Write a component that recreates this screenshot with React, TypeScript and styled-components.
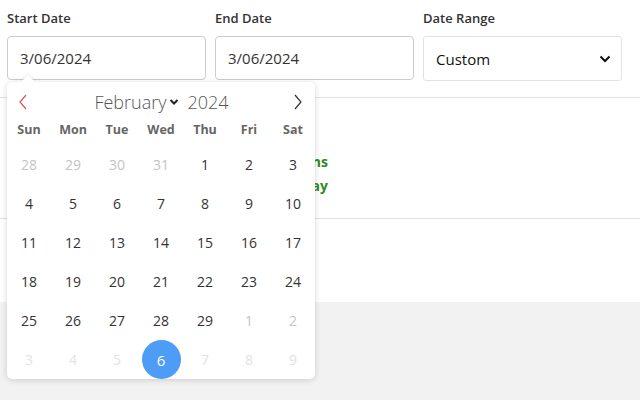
import React from "react";
import styled, { createGlobalStyle } from "styled-components";

const GlobalStyle = createGlobalStyle`
  html, body {
    margin: 0;
    padding: 0;
    background: #fff;
    font-family: "Open Sans", "Noto Sans", sans-serif;
    color: #333;
  }
  * { box-sizing: border-box; }
`;

type DayCell = { day: number; kind: "out" | "in" | "disabled" | "selected" };

const weekDays = ["Sun", "Mon", "Tue", "Wed", "Thu", "Fri", "Sat"];

function buildDays(): DayCell[] {
  const cells: DayCell[] = [];
  [28, 29, 30, 31].forEach((d) => cells.push({ day: d, kind: "out" }));
  for (let d = 1; d <= 29; d++) cells.push({ day: d, kind: "in" });
  cells.push({ day: 1, kind: "out" }, { day: 2, kind: "out" });
  [3, 4, 5].forEach((d) => cells.push({ day: d, kind: "disabled" }));
  cells.push({ day: 6, kind: "selected" });
  [7, 8, 9].forEach((d) => cells.push({ day: d, kind: "disabled" }));
  return cells;
}

export default function App() {
  const days = buildDays();
  return (
    <>
      <GlobalStyle />
      <Page>
        <Filters>
          <Field>
            <Label>Start Date</Label>
            <DateInput>3/06/2024</DateInput>
            <Popup>
              <Notch />
              <CalHeader>
                <NavButton $prev>
                  <svg width="10" height="16" viewBox="0 0 10 16">
                    <path d="M8 1 L2 8 L8 15" fill="none" stroke="currentColor" strokeWidth="1.2" />
                  </svg>
                </NavButton>
                <MonthYear>
                  <span>February</span>
                  <svg width="10" height="8" viewBox="0 0 10 8">
                    <path d="M1.5 2 L5 5.5 L8.5 2" fill="none" stroke="#222" strokeWidth="2" />
                  </svg>
                  <Year>2024</Year>
                </MonthYear>
                <NavButton>
                  <svg width="10" height="16" viewBox="0 0 10 16">
                    <path d="M2 1 L8 8 L2 15" fill="none" stroke="currentColor" strokeWidth="1.2" />
                  </svg>
                </NavButton>
              </CalHeader>
              <Grid>
                {weekDays.map((w) => (
                  <WeekDay key={w}>{w}</WeekDay>
                ))}
                {days.map((c, i) => (
                  <Day key={i} $kind={c.kind}>
                    {c.kind === "selected" ? <Selected>{c.day}</Selected> : c.day}
                  </Day>
                ))}
              </Grid>
            </Popup>
          </Field>
          <Field>
            <Label>End Date</Label>
            <DateInput>3/06/2024</DateInput>
          </Field>
          <Field>
            <Label>Date Range</Label>
            <Select>
              <span>Custom</span>
              <svg width="12" height="8" viewBox="0 0 12 8">
                <path d="M1.5 1.5 L6 6 L10.5 1.5" fill="none" stroke="#111" strokeWidth="2" />
              </svg>
            </Select>
          </Field>
        </Filters>
        <Summary>
          <SummaryLine>Total 0 sessions</SummaryLine>
          <SummaryLine>Average 0 per day</SummaryLine>
        </Summary>
        <Spacer />
        <Footer />
      </Page>
    </>
  );
}

const Page = styled.div`
  min-height: 400px;
  display: flex;
  flex-direction: column;
  background: #fff;
`;

const Filters = styled.div`
  position: relative;
  z-index: 2;
  display: flex;
  gap: 9px;
  padding: 8px 7px 16px;
  border-bottom: 1px solid #e3e3e3;
`;

const Field = styled.div`
  position: relative;
  width: 199px;
  display: flex;
  flex-direction: column;
`;

const Label = styled.div`
  font-size: 13px;
  font-weight: 600;
  color: #333;
  height: 28px;
  line-height: 20px;
`;

const DateInput = styled.div`
  height: 44px;
  border: 1px solid #cccccc;
  border-radius: 4px;
  padding: 0 12px;
  display: flex;
  align-items: center;
  font-size: 15px;
  color: #333;
`;

const Select = styled.div`
  height: 45px;
  border: 1px solid #e3e3e3;
  border-radius: 3px;
  padding: 0 10px 0 12px;
  display: flex;
  align-items: center;
  justify-content: space-between;
  font-size: 15px;
  color: #111;
`;

const Popup = styled.div`
  position: absolute;
  top: 74px;
  left: 0;
  width: 308px;
  background: #fff;
  border-radius: 5px;
  box-shadow: 0 1px 6px rgba(0, 0, 0, 0.16);
  z-index: 10;
`;

const Notch = styled.div`
  position: absolute;
  top: -5px;
  left: 16px;
  width: 10px;
  height: 10px;
  background: #fff;
  transform: rotate(45deg);
  box-shadow: -1px -1px 2px rgba(0, 0, 0, 0.08);
`;

const CalHeader = styled.div`
  position: relative;
  height: 40px;
  display: flex;
  align-items: center;
  justify-content: space-between;
  padding: 0 12px 0 11px;
`;

const NavButton = styled.div<{ $prev?: boolean }>`
  width: 10px;
  height: 16px;
  display: flex;
  color: ${(p) => (p.$prev ? "#d05a5a" : "#333")};
`;

const MonthYear = styled.div`
  display: flex;
  align-items: center;
  gap: 3px;
  font-size: 18px;
  font-weight: 300;
  color: #555;
  margin-left: 2px;
`;

const Year = styled.span`
  margin-left: 5px;
`;

const Grid = styled.div`
  display: grid;
  grid-template-columns: repeat(7, 44px);
  grid-template-rows: 23px;
  grid-auto-rows: 39px;
`;

const WeekDay = styled.div`
  display: flex;
  align-items: flex-start;
  justify-content: center;
  font-size: 12.5px;
  font-weight: 700;
  color: #666;
  line-height: 16px;
`;

const dayColors = {
  out: "#c4c4c4",
  in: "#333",
  disabled: "#e3e3e3",
  selected: "#fff",
};

const Day = styled.div<{ $kind: DayCell["kind"] }>`
  display: flex;
  align-items: center;
  justify-content: center;
  font-size: 14px;
  color: ${(p) => dayColors[p.$kind]};
`;

const Selected = styled.div`
  width: 39px;
  height: 39px;
  border-radius: 50%;
  background: #4d9cf5;
  color: #fff;
  display: flex;
  align-items: center;
  justify-content: center;
  font-size: 15px;
`;

const Summary = styled.div`
  height: 121px;
  padding-top: 52px;
  border-bottom: 1px solid #e3e3e3;
  display: flex;
  flex-direction: column;
  align-items: flex-end;
  width: 100%;
  padding-right: 312px;
`;

const SummaryLine = styled.div`
  font-size: 14px;
  font-weight: 700;
  color: #2e8b1e;
  line-height: 24px;
`;

const Spacer = styled.div`
  height: 83px;
`;

const Footer = styled.div`
  flex: 1;
  background: #f2f2f2;
`;
